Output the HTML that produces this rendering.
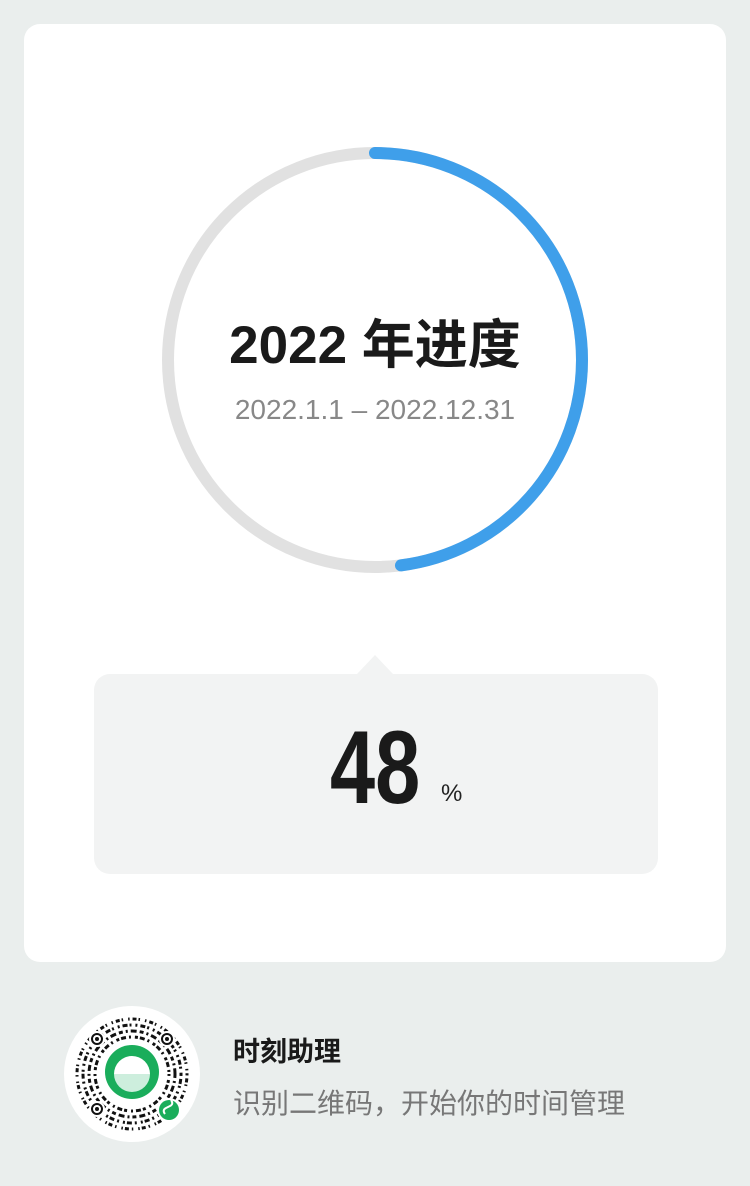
<!DOCTYPE html>
<html><head><meta charset="utf-8"><style>
*{margin:0;padding:0;box-sizing:border-box}
body{width:750px;height:1186px;background:#eaeeed;position:relative;overflow:hidden;font-family:"Liberation Sans","Noto Sans CJK SC",sans-serif}
.card{position:absolute;left:24px;top:24px;width:702px;height:938px;background:#fff;border-radius:16px}
.t{position:absolute;left:0;width:750px;text-align:center}
.box{position:absolute;left:94px;top:674px;width:564px;height:200px;background:#f2f3f3;border-radius:16px}
.tri{position:absolute;left:357px;top:655px;width:0;height:0;border-left:18px solid transparent;border-right:18px solid transparent;border-bottom:19px solid #f2f3f3}
</style></head><body>
<div class="card"></div>
<svg style="position:absolute;left:0;top:0" width="750" height="700">
<circle cx="375" cy="360" r="207" fill="none" stroke="#e1e1e1" stroke-width="12"/>
<circle cx="375" cy="360" r="207" fill="none" stroke="#3f9fea" stroke-width="12" stroke-linecap="round" stroke-dasharray="624 2000" transform="rotate(-90 375 360)"/>
</svg>
<div class="t" style="top:313px;font-size:53px;font-weight:bold;color:#1a1a1a;line-height:66px">2022 年进度</div>
<div class="t" style="top:392px;font-size:28px;color:#888;line-height:36px">2022.1.1 – 2022.12.31</div>
<div class="tri"></div>
<div class="box"></div>
<div style="position:absolute;left:330px;top:713px;font-size:104px;font-weight:bold;color:#1a1a1a;line-height:110px;transform:scaleX(0.78);transform-origin:left">48</div>
<div style="position:absolute;left:441px;top:780px;font-size:24px;color:#222">%</div>
<svg style="position:absolute;left:64px;top:1006px" width="136" height="136" viewBox="0 0 136 136">
<circle cx="68" cy="68" r="68" fill="#fff"/>
<g fill="none" stroke="#111">
<circle cx="68" cy="68" r="55" stroke-width="3" stroke-dasharray="1.5 3 4 2 1.5 5"/>
<circle cx="68" cy="68" r="49" stroke-width="3" stroke-dasharray="2 3 5 2 2 4"/>
<circle cx="68" cy="68" r="43" stroke-width="3" stroke-dasharray="4 3 2 3 6 3"/>
<circle cx="68" cy="68" r="37" stroke-width="3" stroke-dasharray="2 4 3 2 5 3"/>
</g>
<g fill="#fff"><circle cx="33" cy="33" r="8"/><circle cx="103" cy="33" r="8"/><circle cx="33" cy="103" r="8"/></g>
<g fill="none" stroke="#111" stroke-width="2"><circle cx="33" cy="33" r="5"/><circle cx="103" cy="33" r="5"/><circle cx="33" cy="103" r="5"/></g>
<g fill="#111"><circle cx="33" cy="33" r="2"/><circle cx="103" cy="33" r="2"/><circle cx="33" cy="103" r="2"/></g>
<circle cx="68" cy="66" r="30" fill="#fff"/>
<circle cx="68" cy="66" r="27" fill="#1aad5b"/>
<path d="M50 68 A18 18 0 0 1 86 68 Z" fill="#fff"/>
<path d="M50 68 A18 18 0 0 0 86 68 Z" fill="#cdeedd"/>
<circle cx="105" cy="104" r="12" fill="#fff"/>
<circle cx="105" cy="104" r="10" fill="#1aad5b"/>
<path d="M101 108 q-3 -4 1 -6 l4 -2 q4 -2 1 -6" stroke="#fff" stroke-width="2" fill="none"/>
</svg>
<div style="position:absolute;left:233px;top:1030px;font-size:27px;font-weight:bold;color:#1a1a1a">时刻助理</div>
<div style="position:absolute;left:233px;top:1082px;font-size:28px;color:#777">识别二维码，开始你的时间管理</div>
</body></html>
